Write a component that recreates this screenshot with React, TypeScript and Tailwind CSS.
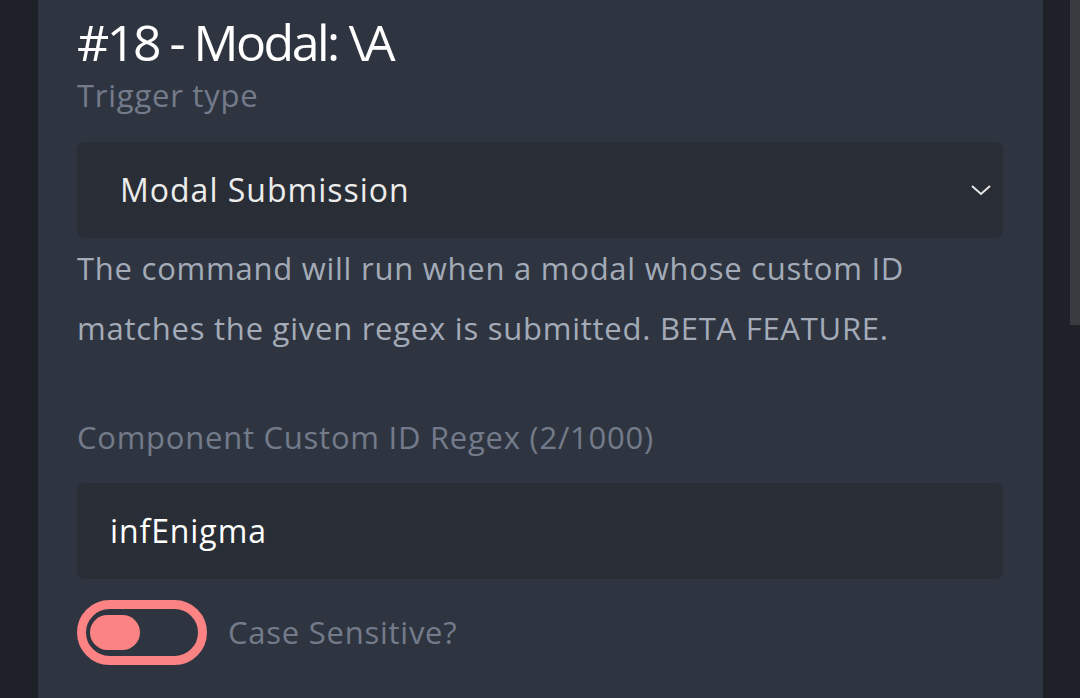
export default function App() {
  return (
    <div
      className="flex h-[698px] w-[1080px] overflow-hidden bg-[#1f2129]"
      style={{ fontFamily: '"Open Sans", "Noto Sans", sans-serif' }}
    >
      {/* left strip */}
      <div className="w-[38px] shrink-0 bg-[#1e2127]" />

      {/* panel */}
      <div className="flex w-[1005px] shrink-0 flex-col bg-[#2f3540] pl-[39px] pr-[40px] pt-[17px]">
        <h1 className="text-[50px] leading-[50px] tracking-[-2.5px] text-white">#18 - Modal: \A</h1>
        <div className="mt-[8px] text-[31px] leading-[40px] tracking-[0.75px] text-[#737b8b]">Trigger type</div>

        <div className="mt-[27px] flex h-[96px] items-center justify-between rounded-[8px] bg-[#292d35] pl-[43px] pr-[10px]">
          <span className="text-[32px] tracking-[1px] text-[#ececec]">Modal Submission</span>
          <svg width="22" height="14" viewBox="0 0 22 14" fill="none" className="mr-[1px]">
            <path d="M2 3 L11 11 L20 3" stroke="#e6e6e6" strokeWidth="2" />
          </svg>
        </div>

        <p className="text-[31px] leading-[60px] tracking-[0.75px] text-[#a4abb8]">
          The command will run when a modal whose custom ID
          <br />
          matches the given regex is submitted. BETA FEATURE.
        </p>

        <div className="mt-[59px] text-[31px] leading-[40px] tracking-[0.75px] text-[#737b8b]">
          Component Custom ID Regex (2/1000)
        </div>

        <div className="mt-[26px] flex h-[96px] items-center rounded-[8px] bg-[#292d35] pl-[33px]">
          <span className="text-[32px] tracking-[0.9px] text-white">infEnigma</span>
        </div>

        <div className="mt-[21px] flex items-center gap-[21px]">
          <div className="flex h-[65px] w-[130px] items-center rounded-full border-[9px] border-[#fb8383] bg-[#2f3540] pl-[4px]">
            <div className="h-[35px] w-[50px] rounded-full bg-[#fb8383]" />
          </div>
          <span className="text-[31px] tracking-[0.75px] text-[#737b8b]">Case Sensitive?</span>
        </div>
      </div>

      {/* right strip with scrollbar */}
      <div className="flex flex-1 justify-end bg-[#1f2129]">
        <div className="h-[325px] w-[10px] bg-[#393b40]" />
      </div>
    </div>
  );
}
